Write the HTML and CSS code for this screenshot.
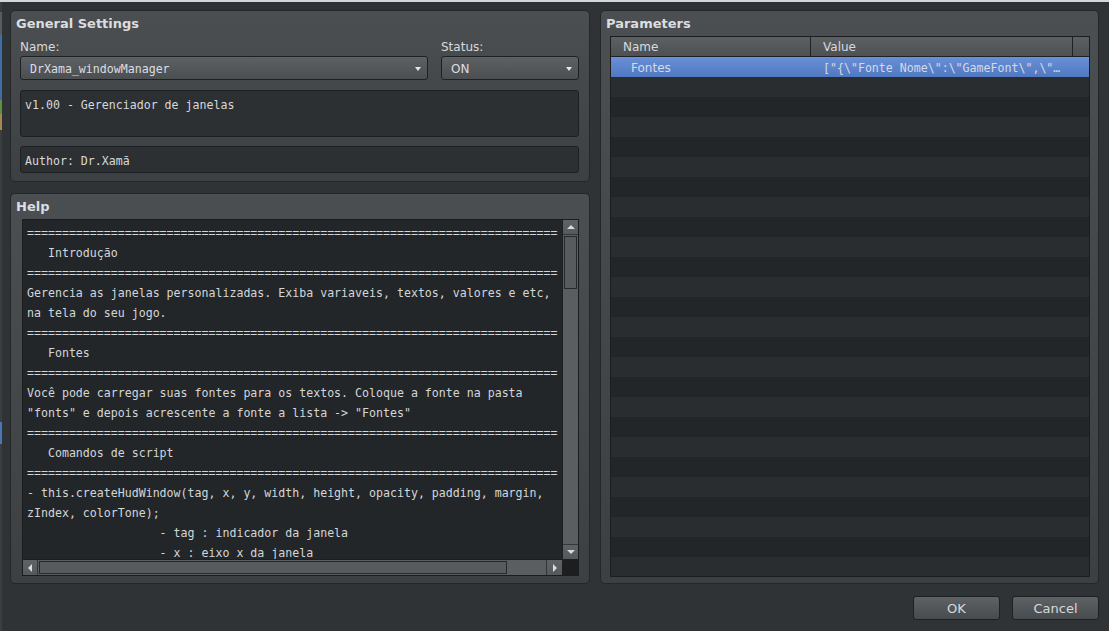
FILE: index.html
```html
<!DOCTYPE html>
<html lang="pt">
<head>
<meta charset="utf-8">
<title>Plugin Manager</title>
<link rel="stylesheet" href="styles.css">
</head>
<body>
<div class="edge"></div>
<div class="dialog">
  <div class="columns">
    <div class="left">
      <section class="group general">
        <h2 class="group-title">General Settings</h2>
        <div class="name-status">
          <label class="label">Name:</label>
          <label class="label">Status:</label>
          <div class="combo mono">DrXama_windowManager<span class="caret"></span></div>
          <div class="combo">ON<span class="caret"></span></div>
        </div>
        <div class="field desc mono">v1.00 - Gerenciador de janelas</div>
        <div class="field author mono">Author: Dr.Xamã</div>
      </section>
      <section class="group help">
        <h2 class="group-title help-title">Help</h2>
        <div class="textarea">
<pre class="text mono">============================================================================
   Introdução
============================================================================
Gerencia as janelas personalizadas. Exiba variaveis, textos, valores e etc,
na tela do seu jogo.
============================================================================
   Fontes
============================================================================
Você pode carregar suas fontes para os textos. Coloque a fonte na pasta
"fonts" e depois acrescente a fonte a lista -> "Fontes"
============================================================================
   Comandos de script
============================================================================
- this.createHudWindow(tag, x, y, width, height, opacity, padding, margin,
zIndex, colorTone);
                   - tag : indicador da janela
                   - x : eixo x da janela</pre>
          <div class="vscroll">
            <div class="sb-btn up"><span class="tri-up"></span></div>
            <div class="vtrack"><div class="vthumb"></div></div>
            <div class="sb-btn down"><span class="tri-down"></span></div>
          </div>
          <div class="hscroll">
            <div class="sb-btn left-btn"><span class="tri-left"></span></div>
            <div class="htrack"><div class="hthumb"></div></div>
            <div class="sb-btn right-btn"><span class="tri-right"></span></div>
          </div>
          <div class="corner"></div>
        </div>
      </section>
    </div>
    <section class="group params">
      <h2 class="group-title params-title">Parameters</h2>
      <div class="table">
        <div class="thead">
          <div class="th">Name</div>
          <div class="th">Value</div>
          <div class="th th-end"></div>
        </div>
        <div class="row selected">
          <div class="cell name-cell">Fontes</div>
          <div class="cell value-cell mono">["{\"Fonte Nome\":\"GameFont\",\"…</div>
        </div>
        <div class="row odd"></div><div class="row"></div>
        <div class="row odd"></div><div class="row"></div>
        <div class="row odd"></div><div class="row"></div>
        <div class="row odd"></div><div class="row"></div>
        <div class="row odd"></div><div class="row"></div>
        <div class="row odd"></div><div class="row"></div>
        <div class="row odd"></div><div class="row"></div>
        <div class="row odd"></div><div class="row"></div>
        <div class="row odd"></div><div class="row"></div>
        <div class="row odd"></div><div class="row"></div>
        <div class="row odd"></div><div class="row"></div>
        <div class="row odd"></div><div class="row"></div>
        <div class="row odd"></div><div class="row"></div>
      </div>
    </section>
  </div>
  <div class="buttons">
    <button class="btn">OK</button>
    <button class="btn">Cancel</button>
  </div>
</div>
</body>
</html>
```
FILE: styles.css
```css
* { box-sizing: border-box; }

html, body { margin: 0; padding: 0; }

body {
  width: 1109px;
  height: 631px;
  overflow: hidden;
  display: flex;
  background: #303336;
  border-top: 2px solid #d4d6d7;
  font-family: "DejaVu Sans", sans-serif;
  font-size: 12px;
  color: #d6d8da;
}

.mono {
  font-family: "DejaVu Sans Mono", monospace;
  font-size: 11.6px;
}

.edge {
  width: 2px;
  flex: none;
  background: linear-gradient(to bottom,
    #3a3d40 0 10px, #585c60 10px 33px, #3d6ea8 33px 98px,
    #5f8e45 98px 112px, #a7874f 112px 128px, #3b3e41 128px 420px,
    #4a78b6 420px 442px, #3b3e41 442px);
}

.dialog {
  flex: 1;
  padding: 8px 10px 0 8px;
  display: flex;
  flex-direction: column;
}

.columns {
  display: flex;
  gap: 10px;
  height: 574px;
}

.left {
  width: 580px;
  display: flex;
  flex-direction: column;
  gap: 11px;
}

.group {
  border: 1px solid #24272a;
  border-radius: 5px;
  background: linear-gradient(to bottom, #4b4f52, #3c4043);
}

.group-title {
  margin: 0;
  height: 18px;
  line-height: 18px;
  font-size: 13px;
  font-weight: bold;
  color: #dcdddf;
}

/* General settings */
.general {
  height: 172px;
  padding: 4px 10px 0 9px;
}
.general .group-title { margin-left: -4px; }

.name-status {
  margin-top: 5px;
  display: grid;
  grid-template-columns: 408px 138px;
  column-gap: 13px;
  row-gap: 2px;
}

.label {
  line-height: 16px;
  height: 16px;
  padding-top: 1px;
  color: #d8d9db;
}

.combo {
  height: 24px;
  border: 1px solid #1e2124;
  border-radius: 3px;
  background: linear-gradient(to bottom, #5d6164, #4b4f52);
  display: flex;
  align-items: center;
  justify-content: space-between;
  padding: 2px 6px 0 9px;
  color: #dcdde0;
}

.caret {
  width: 0;
  height: 0;
  margin-bottom: 1px;
  border-left: 3.5px solid transparent;
  border-right: 3.5px solid transparent;
  border-top: 4px solid #e6e7e8;
}

.field {
  background: #2d3033;
  border: 1px solid #1d2023;
  border-radius: 3px;
  padding: 7px 4px 0 4px;
  line-height: 14px;
  color: #d6d8da;
}
.desc { margin-top: 10px; height: 47px; }
.author { margin-top: 9px; height: 27px; }

/* Help */
.help {
  flex: 1;
  padding: 4px 10px 0 11px;
}
.help-title { margin-left: -6px; }

.textarea {
  margin-top: 3px;
  height: 357px;
  border: 1px solid #1a1c1e;
  background: #232629;
  display: grid;
  grid-template-columns: 1fr 16px;
  grid-template-rows: 1fr 16px;
  overflow: hidden;
}

.text {
  margin: 0;
  padding: 3px 0 0 4px;
  line-height: 20px;
  white-space: pre;
  overflow: hidden;
  color: #d3d6d9;
}

.vscroll {
  display: flex;
  flex-direction: column;
  border-left: 1px solid #1c1e20;
  background: #5a5e61;
}

.hscroll {
  display: flex;
  border-top: 1px solid #1c1e20;
  background: #5a5e61;
}

.sb-btn {
  flex: none;
  display: flex;
  align-items: center;
  justify-content: center;
  background: linear-gradient(to bottom, #5f6366, #55595c);
}
.up { height: 15px; border-bottom: 1px solid #33363a; }
.down { height: 15px; border-top: 1px solid #33363a; }
.left-btn { width: 15px; border-right: 1px solid #33363a; }
.right-btn { width: 16px; border-left: 1px solid #33363a; }

.vtrack { flex: 1; padding: 1px 1px; }
.vthumb {
  height: 53px;
  border: 1px solid #26292c;
  background: #575b5e;
}
.htrack { flex: 1; padding: 1px 1px; }
.hthumb {
  width: 468px;
  height: 100%;
  border: 1px solid #26292c;
  background: #575b5e;
}

.tri-up, .tri-down, .tri-left, .tri-right { width: 0; height: 0; }
.tri-up {
  border-left: 4px solid transparent;
  border-right: 4px solid transparent;
  border-bottom: 4px solid #d8dadc;
}
.tri-down {
  border-left: 4px solid transparent;
  border-right: 4px solid transparent;
  border-top: 4px solid #d8dadc;
}
.tri-left {
  border-top: 4px solid transparent;
  border-bottom: 4px solid transparent;
  border-right: 4px solid #d8dadc;
}
.tri-right {
  border-top: 4px solid transparent;
  border-bottom: 4px solid transparent;
  border-left: 4px solid #d8dadc;
}

.corner { background: #1c1e20; }

/* Parameters */
.params {
  width: 499px;
  padding: 4px 8px 0 9px;
}
.params-title { margin-left: -4px; }

.table {
  margin-top: 3px;
  height: 541px;
  border: 1px solid #1b1d1f;
  background: #242729;
  overflow: hidden;
}

.thead {
  display: grid;
  grid-template-columns: 200px 262px 1fr;
  height: 20px;
  border-bottom: 1px solid #1f2225;
  background: linear-gradient(to bottom, #5c6063, #4d5154);
}
.th {
  padding: 1px 0 0 12px;
  line-height: 19px;
  border-right: 1px solid #1f2225;
  color: #d8d9db;
}
.th-end { border-right: none; }

.row {
  height: 20px;
  background: #232629;
  display: grid;
  grid-template-columns: 200px 278px;
  overflow: hidden;
}
.row.odd { background: #2a2d30; }
.row.selected {
  background: linear-gradient(to bottom, #6990d6, #5078c1);
}
.cell {
  padding-top: 1px;
  line-height: 20px;
  white-space: nowrap;
  overflow: hidden;
  color: #d4dbe7;
}
.name-cell { padding-left: 20px; }
.value-cell { padding-left: 12px; }

/* Buttons */
.buttons {
  margin-top: 12px;
  display: flex;
  justify-content: flex-end;
  gap: 12px;
  padding-right: 0;
}

.btn {
  width: 87px;
  height: 24px;
  border: 1px solid #1e2124;
  border-radius: 3px;
  background: linear-gradient(to bottom, #5e6265, #474b4e);
  color: #d8d9db;
  font-family: "DejaVu Sans", sans-serif;
  font-size: 13px;
  padding: 0;
}
```
